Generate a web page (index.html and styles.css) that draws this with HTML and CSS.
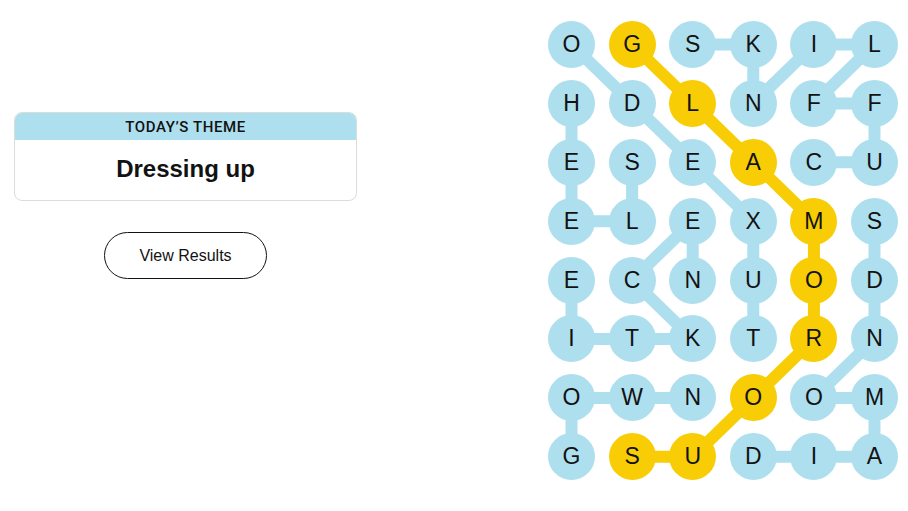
FILE: index.html
```html
<!DOCTYPE html>
<html lang="en">
<head>
<meta charset="utf-8">
<title>Strands</title>
<link rel="stylesheet" href="styles.css">
</head>
<body>
<main class="page">
  <section class="left">
    <div class="theme-card">
      <div class="theme-head">TODAY’S THEME</div>
      <div class="theme-body">Dressing up</div>
    </div>
    <button class="results-btn">View Results</button>
  </section>

  <section class="board">
    <svg class="links" width="350" height="460" viewBox="0 0 350 460" aria-hidden="true">
      <g stroke="#aedfee" stroke-width="12" stroke-linecap="butt" fill="none">
        <!-- TUXEDO -->
        <line x1="23.5" y1="23.5" x2="84.1" y2="82.4"/>
        <line x1="84.1" y1="82.4" x2="144.7" y2="141.3"/>
        <line x1="144.7" y1="141.3" x2="205.3" y2="200.2"/>
        <line x1="205.3" y1="200.2" x2="205.3" y2="259.1"/>
        <line x1="205.3" y1="259.1" x2="205.3" y2="318"/>
        <!-- CUFFLINKS -->
        <line x1="144.7" y1="23.5" x2="205.3" y2="23.5"/>
        <line x1="205.3" y1="23.5" x2="205.3" y2="82.4"/>
        <line x1="205.3" y1="82.4" x2="265.9" y2="23.5"/>
        <line x1="265.9" y1="23.5" x2="326.5" y2="23.5"/>
        <line x1="326.5" y1="23.5" x2="265.9" y2="82.4"/>
        <line x1="265.9" y1="82.4" x2="326.5" y2="82.4"/>
        <line x1="326.5" y1="82.4" x2="326.5" y2="141.3"/>
        <line x1="326.5" y1="141.3" x2="265.9" y2="141.3"/>
        <!-- HEELS -->
        <line x1="23.5" y1="82.4" x2="23.5" y2="200.2"/>
        <line x1="23.5" y1="200.2" x2="84.1" y2="200.2"/>
        <line x1="84.1" y1="200.2" x2="84.1" y2="141.3"/>
        <!-- NECKTIE -->
        <line x1="144.7" y1="259.1" x2="144.7" y2="200.2"/>
        <line x1="144.7" y1="200.2" x2="84.1" y2="259.1"/>
        <line x1="84.1" y1="259.1" x2="144.7" y2="318"/>
        <line x1="144.7" y1="318" x2="23.5" y2="318"/>
        <line x1="23.5" y1="318" x2="23.5" y2="259.1"/>
        <!-- DIAMONDS -->
        <line x1="205.3" y1="435.8" x2="326.5" y2="435.8"/>
        <line x1="326.5" y1="435.8" x2="326.5" y2="376.9"/>
        <line x1="326.5" y1="376.9" x2="265.9" y2="376.9"/>
        <line x1="265.9" y1="376.9" x2="326.5" y2="318"/>
        <line x1="326.5" y1="318" x2="326.5" y2="200.2"/>
        <!-- GOWN -->
        <line x1="23.5" y1="435.8" x2="23.5" y2="376.9"/>
        <line x1="23.5" y1="376.9" x2="144.7" y2="376.9"/>
      </g>
      <g stroke="#f8cd05" stroke-width="12" fill="none">
        <!-- GLAMOROUS -->
        <polyline points="84.1,23.5 144.7,82.4 205.3,141.3 265.9,200.2 265.9,259.1 265.9,318 205.3,376.9 144.7,435.8 84.1,435.8"/>
      </g>
    </svg>
    <div class="grid">
      <span class="cell">O</span><span class="cell hit">G</span><span class="cell">S</span><span class="cell">K</span><span class="cell">I</span><span class="cell">L</span>
      <span class="cell">H</span><span class="cell">D</span><span class="cell hit">L</span><span class="cell">N</span><span class="cell">F</span><span class="cell">F</span>
      <span class="cell">E</span><span class="cell">S</span><span class="cell">E</span><span class="cell hit">A</span><span class="cell">C</span><span class="cell">U</span>
      <span class="cell">E</span><span class="cell">L</span><span class="cell">E</span><span class="cell">X</span><span class="cell hit">M</span><span class="cell">S</span>
      <span class="cell">E</span><span class="cell">C</span><span class="cell">N</span><span class="cell">U</span><span class="cell hit">O</span><span class="cell">D</span>
      <span class="cell">I</span><span class="cell">T</span><span class="cell">K</span><span class="cell">T</span><span class="cell hit">R</span><span class="cell">N</span>
      <span class="cell">O</span><span class="cell">W</span><span class="cell">N</span><span class="cell hit">O</span><span class="cell">O</span><span class="cell">M</span>
      <span class="cell">G</span><span class="cell hit">S</span><span class="cell hit">U</span><span class="cell">D</span><span class="cell">I</span><span class="cell">A</span>
    </div>
  </section>
</main>
</body>
</html>
```

FILE: styles.css
```css
* { box-sizing: border-box; }

html, body {
  margin: 0;
  padding: 0;
  background: #ffffff;
  color: #121212;
  font-family: "Liberation Sans", Arial, sans-serif;
}

.page {
  display: flex;
  align-items: flex-start;
  padding: 21px 10px 0 14px;
  width: 908px;
  height: 511px;
}

.left {
  width: 343px;
  margin-top: 91px;
  display: flex;
  flex-direction: column;
  align-items: center;
}

.theme-card {
  width: 343px;
  border: 1px solid #dcdcdc;
  border-radius: 8px;
  overflow: hidden;
}

.theme-head {
  height: 27px;
  background: #aedfee;
  display: flex;
  align-items: center;
  justify-content: center;
  font-family: Roboto, "Liberation Sans", sans-serif;
  font-size: 15px;
  font-weight: 500;
  letter-spacing: 0.6px;
  color: #121212;
  padding-top: 1px;
}

.theme-body {
  height: 60px;
  display: flex;
  align-items: center;
  justify-content: center;
  font-size: 24px;
  font-weight: 700;
  color: #121212;
  padding-bottom: 2px;
}

.results-btn {
  margin-top: 31px;
  width: 163px;
  height: 47px;
  border: 1px solid #121212;
  border-radius: 24px;
  background: #ffffff;
  font-family: "Liberation Sans", Arial, sans-serif;
  font-size: 16px;
  color: #121212;
  padding: 0;
}

.board {
  position: relative;
  margin-left: auto;
  width: 350px;
  height: 460px;
}

.links {
  position: absolute;
  left: 0;
  top: 0;
}

.grid {
  position: relative;
  display: grid;
  grid-template-columns: repeat(6, 47px);
  grid-auto-rows: 47px;
  column-gap: 13.6px;
  row-gap: 11.9px;
}

.cell {
  width: 47px;
  height: 47px;
  border-radius: 50%;
  background: #aedfee;
  display: flex;
  align-items: center;
  justify-content: center;
  font-size: 23px;
  color: #121212;
  line-height: 1;
}

.cell.hit {
  background: #f8cd05;
}
```
